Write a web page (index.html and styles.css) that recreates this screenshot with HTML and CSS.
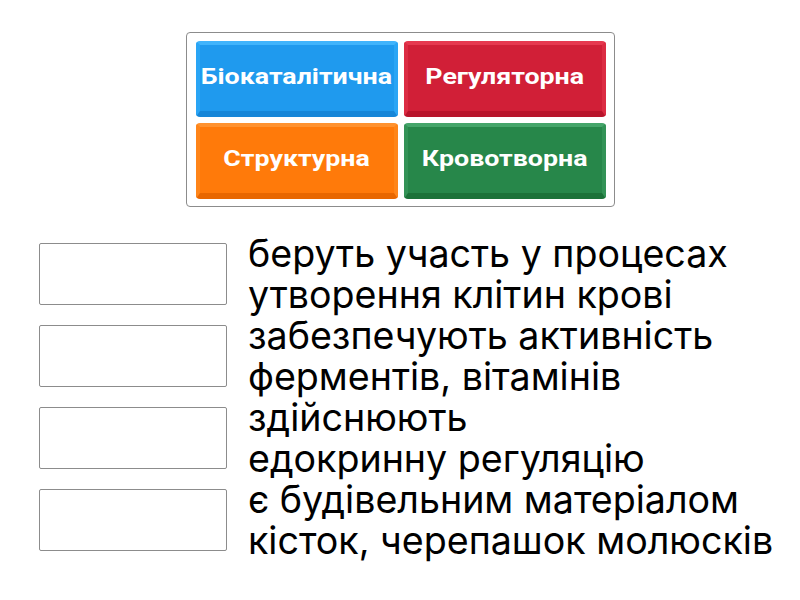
FILE: index.html
```html
<!DOCTYPE html>
<html lang="uk">
<head>
    <meta charset="UTF-8">
    <meta name="viewport" content="width=device-width, initial-scale=1.0">
    <title>Функції мінеральних речовин</title>
    <link rel="stylesheet" href="styles.css">
</head>
<body>
    <div class="page">
        <div class="answer-bank">
            <div class="tile tile-blue"><span class="tile-label">Біокаталітична</span></div>
            <div class="tile tile-red"><span class="tile-label">Регуляторна</span></div>
            <div class="tile tile-orange"><span class="tile-label">Структурна</span></div>
            <div class="tile tile-green"><span class="tile-label">Кровотворна</span></div>
        </div>

        <div class="questions">
            <div class="row">
                <div class="drop-box"></div>
                <p class="clue">беруть участь у процесах<br>утворення клітин крові</p>
            </div>
            <div class="row">
                <div class="drop-box"></div>
                <p class="clue">забезпечують активність<br>ферментів, вітамінів</p>
            </div>
            <div class="row">
                <div class="drop-box"></div>
                <p class="clue">здійснюють<br>едокринну регуляцію</p>
            </div>
            <div class="row">
                <div class="drop-box"></div>
                <p class="clue">є будівельним матеріалом<br>кісток, черепашок молюсків</p>
            </div>
        </div>
    </div>
</body>
</html>
```
FILE: styles.css
```css
body {
    font-family: Inter, Roboto, sans-serif;
    margin: 0;
    padding: 0;
    background-color: #ffffff;
    color: #000000;
}

.page {
    width: 800px;
    height: 600px;
    display: flex;
    flex-direction: column;
    align-items: center;
    padding-top: 32px;
    box-sizing: border-box;
}

.answer-bank {
    display: grid;
    grid-template-columns: 202px 202px;
    grid-auto-rows: 76px;
    gap: 6px;
    padding: 8px 8px 7px 9px;
    border: 1px solid #8c8c8c;
    border-radius: 4px;
}

.tile {
    display: flex;
    justify-content: center;
    align-items: center;
    box-sizing: border-box;
    padding-bottom: 5px;
    border-radius: 4px;
    border-style: solid;
    border-width: 4px 4px 6px 4px;
    color: #ffffff;
    font-family: Roboto, sans-serif;
    font-weight: 700;
    font-size: 22.5px;
}

/* labels are stretched to fill the tile, like the original */
.tile-label {
    display: inline-block;
    transform: scaleX(1.19);
    white-space: nowrap;
}

.tile-blue {
    background-color: #1f9aee;
    border-color: #40b4fc #2aa5f5 #1686d8 #2aa5f5;
}

.tile-red {
    background-color: #d11f37;
    border-color: #e6384f #dc2c43 #b8142b #dc2c43;
}

.tile-orange {
    background-color: #ff7a0a;
    border-color: #ff922f #ff8519 #e86700 #ff8519;
}

.tile-green {
    background-color: #27874a;
    border-color: #45a56a #339357 #1c7239 #339357;
}

.questions {
    align-self: stretch;
    display: flex;
    flex-direction: column;
    margin-top: 26px;
}

.row {
    display: flex;
    align-items: center;
    height: 82px;
}

.drop-box {
    width: 186px;
    height: 60px;
    margin-left: 39px;
    margin-right: 21px;
    border: 1px solid #8c8c8c;
    border-radius: 2px;
}

.clue {
    margin: 0;
    font-family: Inter, sans-serif;
    font-size: 37.6px;
    line-height: 41px;
    white-space: nowrap;
}
```
